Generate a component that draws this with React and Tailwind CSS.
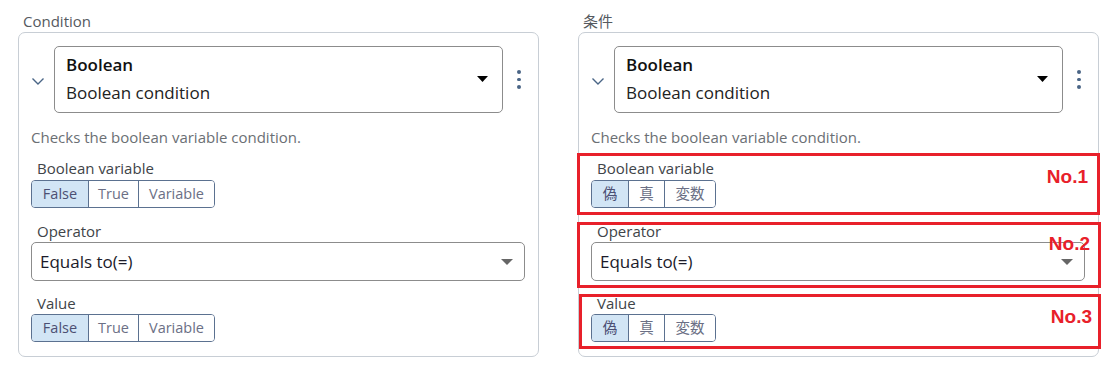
import React from 'react';

const FONT = "font-['Open_Sans','Noto_Sans_CJK_JP',sans-serif]";

const Chevron = () => (
  <svg width="14" height="10" viewBox="0 0 14 10" className="text-[#4a6586]">
    <path d="M1.5 2.5 L7 8 L12.5 2.5" fill="none" stroke="currentColor" strokeWidth="1.4" />
  </svg>
);

const Kebab = () => (
  <div className="flex flex-col items-center gap-[4px] w-[12px]">
    <span className="w-[3.5px] h-[3.5px] rounded-full bg-[#4a6586]" />
    <span className="w-[3.5px] h-[3.5px] rounded-full bg-[#4a6586]" />
    <span className="w-[3.5px] h-[3.5px] rounded-full bg-[#4a6586]" />
  </div>
);

const Caret = ({ color, w = 11, h = 6 }) => (
  <svg width={w} height={h} viewBox={`0 0 ${w} ${h}`}>
    <path d={`M0 0 L${w} 0 L${w / 2} ${h} Z`} fill={color} />
  </svg>
);

const Toggle = ({ items }) => (
  <div className="flex h-[28px] w-max rounded-[4px] border border-[#5b7190] overflow-hidden text-[14.5px]">
    {items.map((it, i) => (
      <div
        key={it.label}
        style={{ width: it.w }}
        className={`flex items-center justify-center ${i > 0 ? 'border-l border-[#5b7190]' : ''} ${i === 0 ? 'bg-[#d2e5f5] text-[#4c4f73]' : 'bg-white text-[#6b6f85]'}`}
      >
        {it.label}
      </div>
    ))}
  </div>
);

const Panel = ({ title, toggle }) => (
  <div className="w-[560px] pl-[18px]">
    <div className="pl-[5px] h-[32px] pt-[12px] text-[15px] leading-[18px] text-[#555a60]">{title}</div>
    <div className="w-[521px] rounded-[7px] border border-[#c8ced5] bg-white pt-[13px] pb-[14px] pl-[12px] pr-[13px]">
      <div className="flex items-center">
        <div className="w-[23px] flex justify-start pt-[2px]"><Chevron /></div>
        <div className="w-[449px] h-[67px] rounded-[5px] border border-[#8c8c8c] pl-[11px] pr-[14px] pb-[2px] flex items-center">
          <div className="flex-1">
            <div className="text-[17px] leading-[28px] font-semibold text-[#111]">Boolean</div>
            <div className="text-[17px] leading-[28px] text-[#222]">Boolean condition</div>
          </div>
          <Caret color="#000" w={11} h={6} />
        </div>
        <div className="ml-[10px]"><Kebab /></div>
      </div>
      <div className="mt-[14px] text-[15px] leading-5 text-[#6b6f74]">Checks the boolean variable condition.</div>
      <div className="mt-[12px] pl-[6px] text-[15px] leading-[18px] text-[#404448]">Boolean variable</div>
      <div className="mt-[3px]"><Toggle items={toggle} /></div>
      <div className="mt-[14px] pl-[6px] text-[15px] leading-[18px] text-[#404448]">Operator</div>
      <div className="mt-[2px] w-[494px] h-[39px] rounded-[5px] border border-[#8c8c8c] pl-[8px] pr-[11px] flex items-center">
        <span className="flex-1 text-[17px] text-[#1b1b2a]">Equals to(=)</span>
        <Caret color="#666" w={12} h={6} />
      </div>
      <div className="mt-[13px] pl-[6px] text-[15px] leading-[18px] text-[#404448]">Value</div>
      <div className="mt-[2px]"><Toggle items={toggle} /></div>
    </div>
  </div>
);

const Mark = ({ label, cls, textCls }) => (
  <div className={`absolute border-[3px] border-[#e8202a] ${cls}`}>
    <span className={`absolute font-['Liberation_Sans',sans-serif] font-bold text-[19px] leading-none text-[#e8202a] ${textCls}`}>{label}</span>
  </div>
);

export default function App() {
  const en = [
    { label: 'False', w: 56 },
    { label: 'True', w: 50 },
    { label: 'Variable', w: 76 },
  ];
  const ja = [
    { label: '偽', w: 36 },
    { label: '真', w: 36 },
    { label: '変数', w: 51 },
  ];
  return (
    <div className={`w-[1120px] h-[369px] bg-white flex ${FONT}`}>
      <Panel title="Condition" toggle={en} />
      <div className="relative">
        <Panel title="条件" toggle={ja} />
        <Mark label="No.1" cls="left-[17px] top-[153px] w-[523px] h-[62px]" textCls="right-[9px] top-[11px]" />
        <Mark label="No.2" cls="left-[17px] top-[222px] w-[524px] h-[66px]" textCls="right-[8px] top-[9px]" />
        <Mark label="No.3" cls="left-[19px] top-[294px] w-[522px] h-[55px]" textCls="right-[6px] top-[10px]" />
      </div>
    </div>
  );
}
